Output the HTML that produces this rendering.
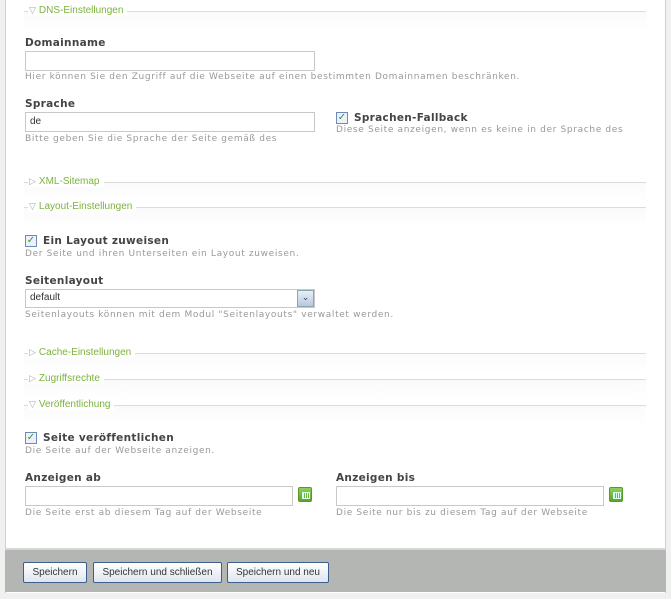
<!DOCTYPE html>
<html><head><meta charset="utf-8"><style>
*{margin:0;padding:0;box-sizing:border-box}
body{width:671px;height:599px;background:#f0f0f0;position:relative;overflow:hidden;font-family:"DejaVu Sans",Verdana,sans-serif}
#main{position:absolute;left:5px;top:0;width:661px;height:593px;background:#fff;border-left:1px solid #d0d0d0;border-right:1px solid #d0d0d0}
.a{position:absolute;white-space:nowrap}
.leg{position:absolute;left:24px;width:622px;height:20px;background:linear-gradient(#fafafa,#fff)}
.leg:before{content:"";position:absolute;left:0;right:0;top:0;border-top:1px solid #dcdcdc}
.leg span{position:absolute;left:4px;top:-6px;background:#fff;padding:0 4px 0 1px;font-family:"Liberation Sans",Arial,sans-serif;font-size:10px;color:#7bb33a}
.leg span i{font-style:normal;color:#aaa;font-size:9px;margin-right:3px}
.lbl{font-size:10.5px;font-weight:bold;color:#444;letter-spacing:.3px}
.hlp{font-size:9px;color:#999;letter-spacing:.65px}
.inp{position:absolute;height:20px;border:1px solid #c8c8c8;background:#fff;font-family:"Liberation Sans",Arial,sans-serif;font-size:10px;color:#333;padding:3px 4px}
.cb{position:absolute;width:12px;height:12px;border:1px solid #6b8db5;background:#eef;font-size:10px;color:#2a9a2a;line-height:10px;text-align:center;font-weight:bold}
.cal{position:absolute;width:14px;height:15px;border-radius:2px;background:linear-gradient(#8fd05a,#5aa32c);border:1px solid #559a2a}
.cal:after{content:"";position:absolute;left:3px;top:4px;width:6px;height:5px;border:1px solid #dfe;background:repeating-linear-gradient(90deg,#dfe 0 1px,transparent 1px 2px)}
#foot{position:absolute;left:5px;top:548px;width:661px;height:44px;background:#b4b6b3;border-top:2px solid #d6d6d6}
.btn{position:absolute;top:12px;height:21px;border:1px solid #3c5f8f;border-radius:2px;background:linear-gradient(#fff,#dfe6ef);font-family:"Liberation Sans",Arial,sans-serif;font-size:10px;color:#333;text-align:center;line-height:19px}
</style></head><body>
<div id="main"></div>
<div class="leg" style="top:11px"><span><i>▽</i>DNS-Einstellungen</span></div>
<div class="a lbl" style="left:25px;top:37px">Domainname</div>
<div class="inp" style="left:25px;top:51px;width:290px"></div>
<div class="a hlp" style="left:25px;top:72px">Hier können Sie den Zugriff auf die Webseite auf einen bestimmten Domainnamen beschränken.</div>
<div class="a lbl" style="left:25px;top:98px">Sprache</div>
<div class="inp" style="left:25px;top:112px;width:290px">de</div>
<div class="a hlp" style="left:25px;top:134px">Bitte geben Sie die Sprache der Seite gemäß des</div>
<div class="cb" style="left:336px;top:112px">✓</div>
<div class="a lbl" style="left:354px;top:112px">Sprachen-Fallback</div>
<div class="a hlp" style="left:336px;top:125px">Diese Seite anzeigen, wenn es keine in der Sprache des</div>
<div class="leg" style="top:182px"><span><i>▷</i>XML-Sitemap</span></div>
<div class="leg" style="top:207px"><span><i>▽</i>Layout-Einstellungen</span></div>
<div class="cb" style="left:25px;top:235px">✓</div>
<div class="a lbl" style="left:43px;top:235px">Ein Layout zuweisen</div>
<div class="a hlp" style="left:25px;top:249px">Der Seite und ihren Unterseiten ein Layout zuweisen.</div>
<div class="a lbl" style="left:25px;top:275px">Seitenlayout</div>
<div class="inp" style="left:25px;top:289px;width:290px;height:19px;padding-top:2px">default</div>
<div class="a" style="left:297px;top:290px;width:17px;height:17px;border:1px solid #8aa;background:linear-gradient(#e8eef8,#b8c8e0);font-size:9px;color:#345;text-align:center;line-height:15px">⌄</div>
<div class="a hlp" style="left:25px;top:310px">Seitenlayouts können mit dem Modul "Seitenlayouts" verwaltet werden.</div>
<div class="leg" style="top:353px"><span><i>▷</i>Cache-Einstellungen</span></div>
<div class="leg" style="top:379px"><span><i>▷</i>Zugriffsrechte</span></div>
<div class="leg" style="top:405px"><span><i>▽</i>Veröffentlichung</span></div>
<div class="cb" style="left:25px;top:432px">✓</div>
<div class="a lbl" style="left:43px;top:432px">Seite veröffentlichen</div>
<div class="a hlp" style="left:25px;top:446px">Die Seite auf der Webseite anzeigen.</div>
<div class="a lbl" style="left:25px;top:472px">Anzeigen ab</div>
<div class="inp" style="left:25px;top:486px;width:268px"></div>
<div class="cal" style="left:298px;top:487px"></div>
<div class="a hlp" style="left:25px;top:508px">Die Seite erst ab diesem Tag auf der Webseite</div>
<div class="a lbl" style="left:336px;top:472px">Anzeigen bis</div>
<div class="inp" style="left:336px;top:486px;width:268px"></div>
<div class="cal" style="left:609px;top:487px"></div>
<div class="a hlp" style="left:336px;top:508px">Die Seite nur bis zu diesem Tag auf der Webseite</div>
<div id="foot">
<div class="btn" style="left:18px;width:64px">Speichern</div>
<div class="btn" style="left:88px;width:129px">Speichern und schließen</div>
<div class="btn" style="left:222px;width:102px">Speichern und neu</div>
</div>
</body></html>
